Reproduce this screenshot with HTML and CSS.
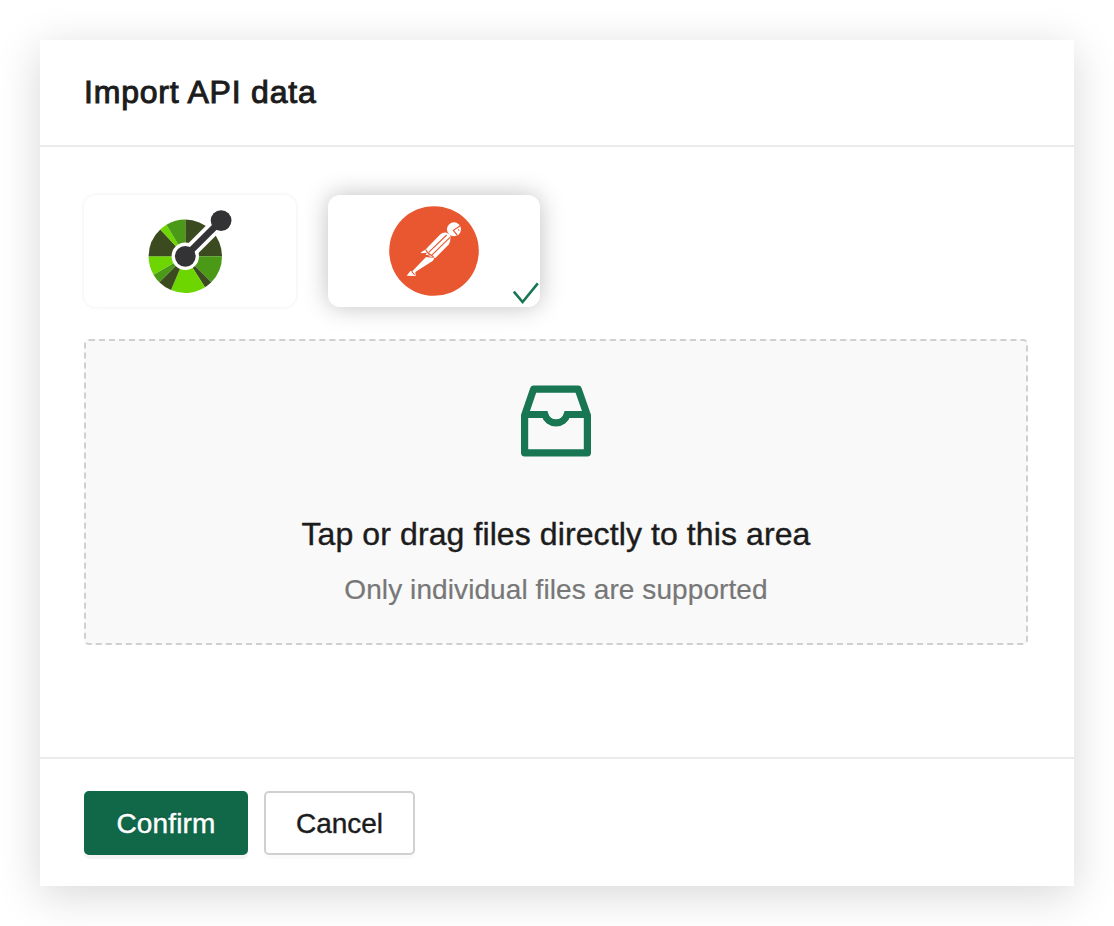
FILE: index.html
```
<!DOCTYPE html>
<html lang="en">
<head>
<meta charset="utf-8">
<title>Import API data</title>
<link rel="stylesheet" href="styles.css">
</head>
<body>
<section class="dialog" role="dialog" aria-labelledby="dialog-title">
  <header class="dialog-header"><h1 class="dialog-title" id="dialog-title">Import API data</h1></header>
  <main class="dialog-body">
    <div class="sources">
      <div class="source">
        <svg class="source-logo" viewBox="-101.3 -61.3 212 112" aria-label="OpenAPI">
          <path fill="#3b4a1f" d="M0 0V-36.7A36.7 36.7 0 0 1 36.7 0Z"/>
          <path fill="#4a9a18" d="M0 0H36.7A36.7 36.7 0 0 1 26 26Z"/>
          <path fill="#3b4a1f" d="M0 0L26 26A36.7 36.7 0 0 1 19.7 31Z"/>
          <path fill="#6dd500" d="M0 0L19.7 31A36.7 36.7 0 0 1 -14.3 33.8Z"/>
          <path fill="#3b4a1f" d="M0 0L-14.3 33.8A36.7 36.7 0 0 1 -26 26Z"/>
          <path fill="#4a9a18" d="M0 0L-26 26A36.7 36.7 0 0 1 -31.8 18.35Z"/>
          <path fill="#6dd500" d="M0 0L-31.8 18.35A36.7 36.7 0 0 1 -36.7 0Z"/>
          <path fill="#3b4a1f" d="M0 0H-36.7A36.7 36.7 0 0 1 -25 -26.8Z"/>
          <path fill="#6dd500" d="M0 0L-25 -26.8A36.7 36.7 0 0 1 -18.9 -31.5Z"/>
          <path fill="#4a9a18" d="M0 0L-18.9 -31.5A36.7 36.7 0 0 1 0 -36.7Z"/>
          <path stroke="#fff" stroke-width="14" d="M0 0L36 -36"/>
          <circle r="13.7" fill="#fff"/>
          <path stroke="#333336" stroke-width="6.6" d="M0 0L36 -36"/>
          <circle r="10.4" fill="#333336"/>
          <circle cx="35.8" cy="-35.7" r="10.4" fill="#333336"/>
        </svg>
      </div>
      <div class="source source-selected">
        <svg class="source-logo" viewBox="0 0 212 112" aria-label="Postman">
          <circle cx="106" cy="56" r="44.8" fill="#e85730"/>
          <g transform="translate(52 5) scale(.33333)">
            <circle cx="222" cy="88" r="21" fill="#fff"/>
            <path fill="none" stroke="#e85730" stroke-width="3.5" d="M241 77L220 91L232 106"/>
            <path fill="none" stroke="#e85730" stroke-width="2.5" d="M235 87L237 93"/>
            <path fill="#fff" d="M200 98Q188 96 179 105L136 149L123 157L124 160L141 158L137 164L146 168L163 173L166 174L207 133Q213 120 211 106Z"/>
            <path fill="#fff" d="M138 171L163 174L159 182L106 216L107 228L80 227L91 213L97 214Z"/>
            <path fill="none" stroke="#e85730" stroke-width="3.2" d="M200 105L146 157M210 112L154 167M137 149L144 159L161 171M137 168L150 164M95 214L104 225"/>
          </g>
        </svg>
        <svg class="source-check" viewBox="0 0 28 24" aria-hidden="true"><path fill="none" stroke="#187653" stroke-width="2.6" d="M1.8 9.7L10.6 20L25.8 1.4"/></svg>
      </div>
    </div>
    <div class="dropzone">
      <svg class="inbox" viewBox="0 0 72 72" aria-hidden="true">
        <g fill="none" stroke="#187653" stroke-width="7.2" stroke-linejoin="round">
          <path d="M4.6 30.5L13.6 4.2H58.2L67.4 30.5V67.8H4.6Z"/>
          <path d="M4.6 29.5H24.8A11.7 11.7 0 0 0 47.2 29.5H67.4" stroke-linejoin="miter"/>
        </g>
      </svg>
      <p class="drop-title">Tap or drag files directly to this area</p>
      <p class="drop-hint">Only individual files are supported</p>
    </div>
  </main>
  <footer class="dialog-footer">
    <button class="button button-primary" type="button">Confirm</button>
    <button class="button button-default" type="button">Cancel</button>
  </footer>
</section>
</body>
</html>
```
FILE: styles.css
```
* { box-sizing: border-box; }
body {
  margin: 0;
  padding: 40px;
  height: 926px;
  overflow: hidden;
  background: #fff;
  color: #1c1c1c;
  font-family: "Liberation Sans", Arial, sans-serif;
}
.dialog {
  display: flex;
  flex-direction: column;
  width: 1034px;
  height: 846px;
  background: #fff;
  box-shadow: 0 9px 42px rgba(0, 0, 0, .155);
}
.dialog-header {
  height: 107px;
  padding: 32px 44px;
  border-bottom: 2px solid #ebebeb;
}
.dialog-title {
  margin: 0;
  font-size: 32px;
  line-height: 40px;
  font-weight: 400;
  letter-spacing: .8px;
  -webkit-text-stroke: 1px currentColor;
}
.dialog-body { flex: 1; padding: 48px 46px 0 44px; }
.sources { display: flex; gap: 32px; }
.source {
  position: relative;
  width: 212px;
  height: 112px;
  border-radius: 12px;
  background: #fff;
  box-shadow: 0 0 4px rgba(0, 0, 0, .08);
}
.source-selected { box-shadow: 0 0 24px rgba(0, 0, 0, .25); }
.source-logo { display: block; width: 212px; height: 112px; }
.source-check {
  position: absolute;
  right: 0;
  bottom: 1px;
  width: 28px;
  height: 24px;
}
.dropzone {
  display: flex;
  flex-direction: column;
  align-items: center;
  height: 306px;
  margin-top: 32px;
  padding-top: 44px;
  border: 2px dashed #d0d0d0;
  border-radius: 5px;
  background: #f9f9f9;
}
.inbox { width: 72px; height: 72px; }
.drop-title {
  margin: 57px 0 0;
  font-size: 32px;
  line-height: 40px;
  letter-spacing: .1px;
  white-space: nowrap;
  -webkit-text-stroke: .4px currentColor;
}
.drop-hint {
  margin: 18px 0 0;
  color: #777;
  font-size: 28px;
  line-height: 36px;
  letter-spacing: .09px;
  white-space: nowrap;
  -webkit-text-stroke: .2px currentColor;
}
.dialog-footer {
  display: flex;
  gap: 16px;
  height: 129px;
  padding: 32px 44px;
  border-top: 2px solid #ebebeb;
}
.button {
  height: 64px;
  padding: 1px 0 0;
  border: 2px solid #d0d0d0;
  border-radius: 5px;
  color: #1c1c1c;
  font-family: inherit;
  font-size: 28px;
  line-height: 60px;
  -webkit-text-stroke: .4px currentColor;
}
.button-primary {
  width: 164px;
  border-color: #106849;
  background: #106849;
  color: #fff;
  letter-spacing: .15px;
  text-shadow: 0 -2px 0 rgba(0, 0, 0, .12);
  box-shadow: 0 4px 0 rgba(0, 0, 0, .045);
}
.button-default {
  width: 151px;
  background: #fff;
  box-shadow: 0 4px 0 rgba(0, 0, 0, .016);
}
```
